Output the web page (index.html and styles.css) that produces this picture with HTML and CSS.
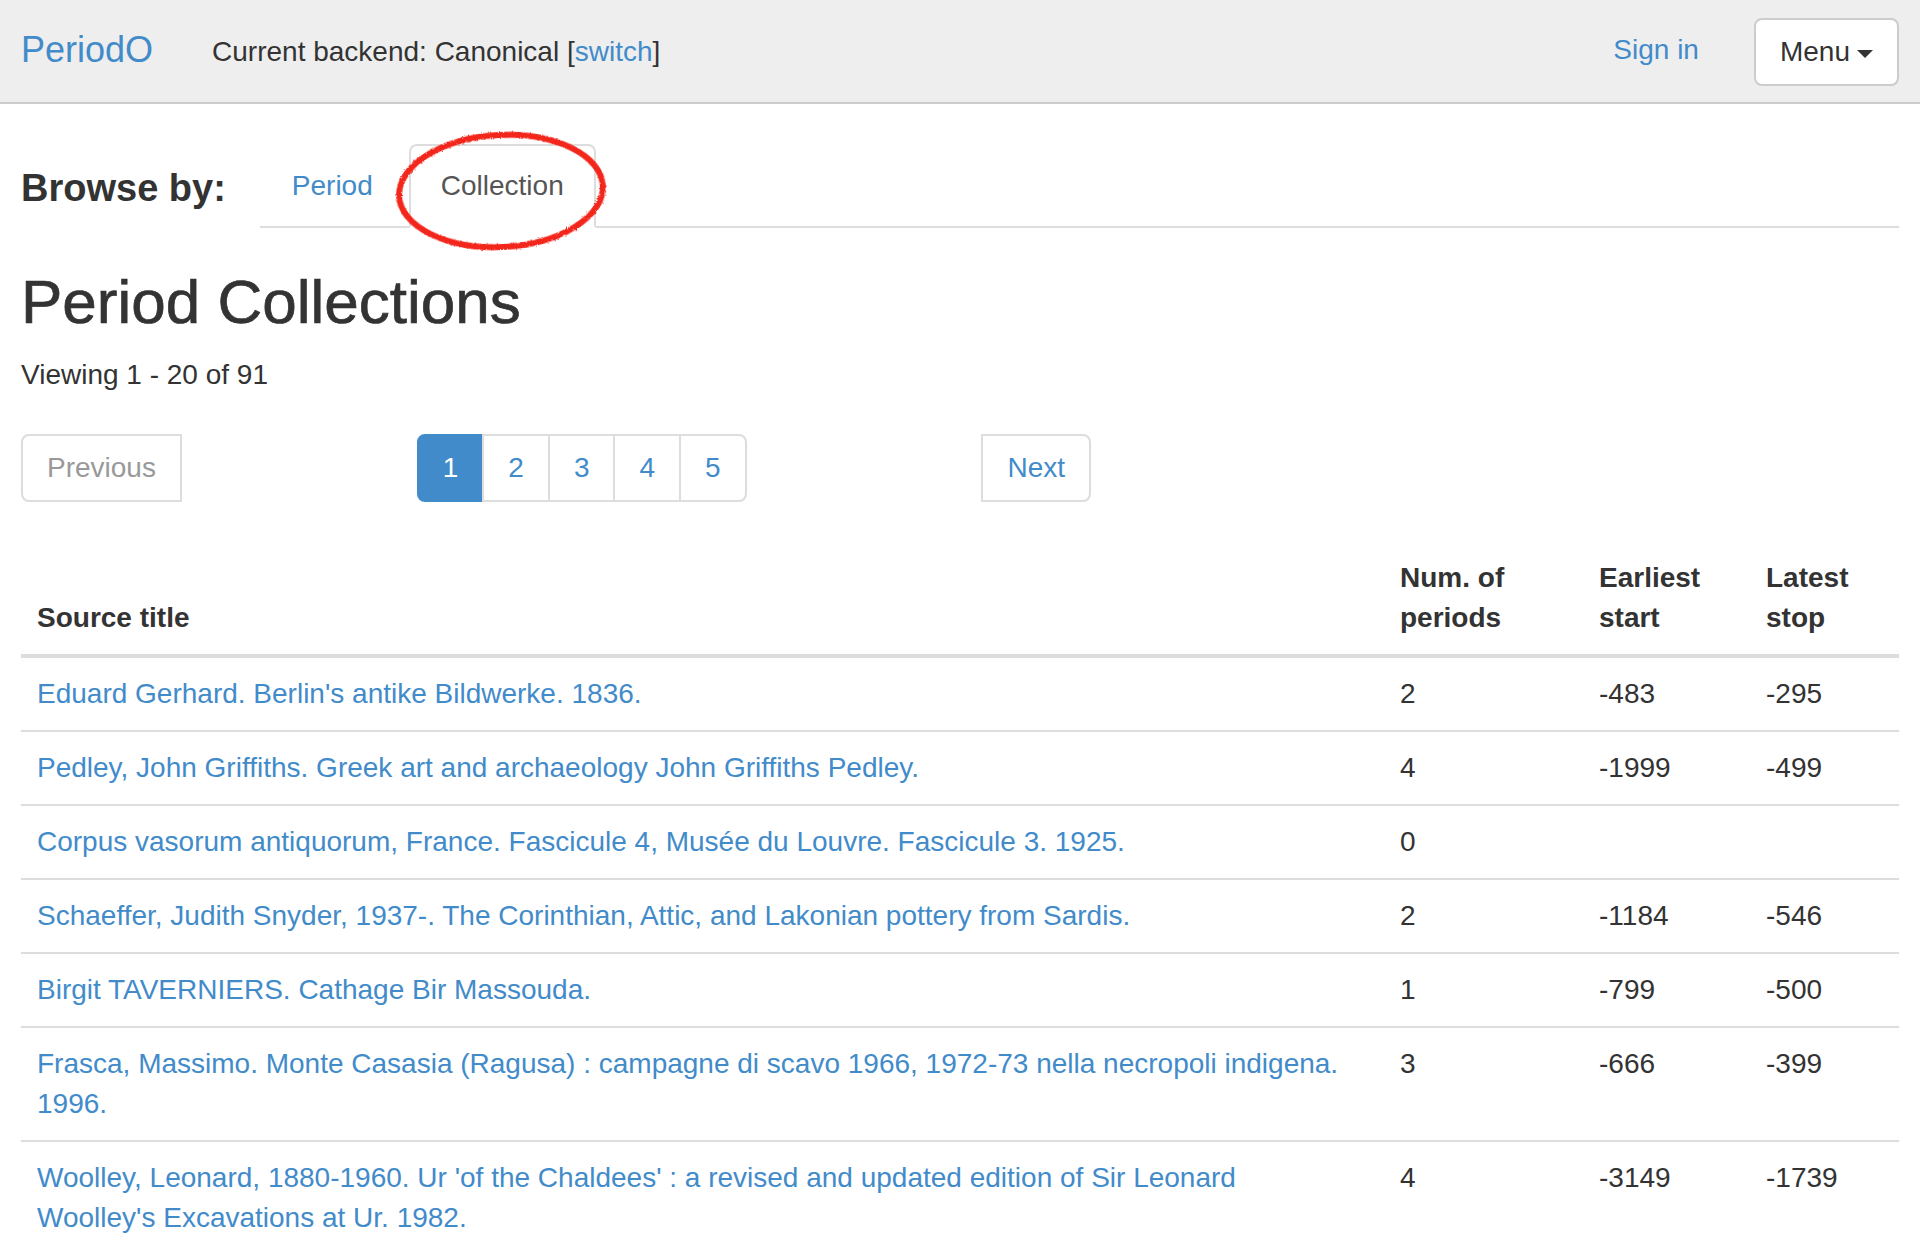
FILE: index.html
```html
<!DOCTYPE html>
<html lang="en">
<head>
<meta charset="utf-8">
<title>PeriodO – Period Collections</title>
<link rel="stylesheet" href="styles.css">
</head>
<body>
<header class="navbar">
  <a class="brand" href="#">PeriodO</a>
  <p class="backend">Current backend: Canonical [<a href="#">switch</a>]</p>
  <div class="nav-right">
    <a class="signin" href="#">Sign in</a>
    <button class="menu-btn" type="button">Menu<span class="caret"></span></button>
  </div>
</header>
<main class="page">
  <div class="browse">
    <h2 class="browse-label">Browse by:</h2>
    <ul class="tabs">
      <li><a href="#">Period</a></li>
      <li class="active"><a href="#">Collection</a></li>
    </ul>
    <svg class="annotation" width="230" height="135" viewBox="0 0 230 135" aria-hidden="true">
      <defs>
        <filter id="rough" x="-10%" y="-10%" width="120%" height="120%">
          <feTurbulence type="fractalNoise" baseFrequency="0.9" numOctaves="2" result="noise"/>
          <feDisplacementMap in="SourceGraphic" in2="noise" scale="3"/>
        </filter>
      </defs>
      <ellipse cx="111" cy="65" rx="102" ry="56" transform="rotate(-3 111 65)" fill="none" stroke="#f3271b" stroke-width="6" filter="url(#rough)"/>
    </svg>
  </div>

  <h1>Period Collections</h1>
  <p class="viewing">Viewing 1 - 20 of 91</p>

  <nav class="pager">
    <ul class="pagination">
      <li class="disabled prev"><span>Previous</span></li>
    </ul>
    <ul class="pagination pages">
      <li class="active first"><span>1</span></li>
      <li><a href="#">2</a></li>
      <li><a href="#">3</a></li>
      <li><a href="#">4</a></li>
      <li class="last"><a href="#">5</a></li>
    </ul>
    <ul class="pagination">
      <li class="next"><a href="#">Next</a></li>
    </ul>
  </nav>

  <table class="table">
    <colgroup>
      <col class="c-title">
      <col class="c-num">
      <col class="c-start">
      <col class="c-stop">
    </colgroup>
    <thead>
      <tr>
        <th>Source title</th>
        <th>Num. of periods</th>
        <th>Earliest start</th>
        <th>Latest stop</th>
      </tr>
    </thead>
    <tbody>
      <tr>
        <td><a href="#">Eduard Gerhard. Berlin's antike Bildwerke. 1836.</a></td>
        <td>2</td><td>-483</td><td>-295</td>
      </tr>
      <tr>
        <td><a href="#">Pedley, John Griffiths. Greek art and archaeology John Griffiths Pedley.</a></td>
        <td>4</td><td>-1999</td><td>-499</td>
      </tr>
      <tr>
        <td><a href="#">Corpus vasorum antiquorum, France. Fascicule 4, Musée du Louvre. Fascicule 3. 1925.</a></td>
        <td>0</td><td></td><td></td>
      </tr>
      <tr>
        <td><a href="#">Schaeffer, Judith Snyder, 1937-. The Corinthian, Attic, and Lakonian pottery from Sardis.</a></td>
        <td>2</td><td>-1184</td><td>-546</td>
      </tr>
      <tr>
        <td><a href="#">Birgit TAVERNIERS. Cathage Bir Massouda.</a></td>
        <td>1</td><td>-799</td><td>-500</td>
      </tr>
      <tr>
        <td><a href="#">Frasca, Massimo. Monte Casasia (Ragusa) : campagne di scavo 1966, 1972-73 nella necropoli indigena. 1996.</a></td>
        <td>3</td><td>-666</td><td>-399</td>
      </tr>
      <tr>
        <td><a href="#">Woolley, Leonard, 1880-1960. Ur 'of the Chaldees' : a revised and updated edition of Sir Leonard Woolley's Excavations at Ur. 1982.</a></td>
        <td>4</td><td>-3149</td><td>-1739</td>
      </tr>
    </tbody>
  </table>
</main>
</body>
</html>
```

FILE: styles.css
```css
* {
  box-sizing: border-box;
}

html {
  overflow: hidden;
}

body {
  margin: 0;
  font-family: "Liberation Sans", Arial, Helvetica, sans-serif;
  font-size: 28px;
  line-height: 40px;
  color: #333;
  background: #fff;
}

a {
  color: #428bca;
  text-decoration: none;
}

/* ---------- navbar ---------- */
.navbar {
  display: flex;
  align-items: flex-start;
  height: 104px;
  padding: 0 21px;
  margin-bottom: 40px;
  background: #eee;
  border-bottom: 2px solid #ccc;
}

.brand {
  font-size: 36px;
  line-height: 40px;
  padding-top: 30px;
}

.backend {
  margin: 32px 0 0 59px;
}

.nav-right {
  margin-left: auto;
  display: flex;
  align-items: flex-start;
}

.signin {
  padding-top: 30px;
  margin-right: 55px;
}

.menu-btn {
  margin-top: 18px;
  height: 68px;
  padding: 12px 24px;
  font: inherit;
  line-height: 40px;
  color: #333;
  background: #fff;
  border: 2px solid #ccc;
  border-radius: 8px;
}

.caret {
  display: inline-block;
  width: 0;
  height: 0;
  margin-left: 7px;
  vertical-align: middle;
  border-top: 8px solid #333;
  border-left: 8px solid transparent;
  border-right: 8px solid transparent;
}

/* ---------- page ---------- */
.page {
  padding: 0 21px;
}

.browse {
  position: relative;
  display: flex;
  align-items: flex-start;
}

.browse-label {
  margin: 0 34px 0 0;
  height: 84px;
  padding-top: 7px;
  font-size: 38px;
  line-height: 74px;
  font-weight: bold;
}

.tabs {
  flex: 1;
  display: flex;
  margin: 0;
  padding: 0;
  list-style: none;
  border-bottom: 2px solid #ddd;
}

.tabs li {
  margin: 0 4px -2px 0;
}

.tabs a {
  display: block;
  padding: 20px 30px;
  line-height: 40px;
  border: 2px solid transparent;
  border-radius: 8px 8px 0 0;
}

.tabs .active a {
  color: #555;
  background: #fff;
  border-color: #ddd;
  border-bottom-color: transparent;
}

.annotation {
  position: absolute;
  left: 369px;
  top: -18px;
  pointer-events: none;
}

h1 {
  margin: 40px 0 19px;
  font-size: 62px;
  line-height: 1.1;
  font-weight: normal;
  -webkit-text-stroke: 0.7px #333;
}

.viewing {
  margin: 0 0 20px;
}

/* ---------- pagination ---------- */
.pager {
  display: flex;
  justify-content: space-between;
  width: 1070px;
  margin: 39px 0 40px;
}

.pagination {
  display: flex;
  margin: 0;
  padding: 0;
  list-style: none;
}

.pagination a,
.pagination span {
  display: block;
  padding: 12px 24px;
  line-height: 40px;
  color: #428bca;
  background: #fff;
  border: 2px solid #ddd;
  margin-left: -2px;
}

.pagination li:first-child a,
.pagination li:first-child span {
  margin-left: 0;
}

.pagination .disabled span {
  color: #999;
}

.pagination .active span {
  color: #fff;
  background: #428bca;
  border-color: #428bca;
}

.pagination .prev span,
.pagination .first span {
  border-radius: 8px 0 0 8px;
}

.pagination .next a,
.pagination .last a {
  border-radius: 0 8px 8px 0;
}

/* ---------- table ---------- */
.table {
  width: 100%;
  border-collapse: collapse;
  table-layout: fixed;
}

.c-num { width: 199px; }
.c-start { width: 167px; }
.c-stop { width: 149px; }

.table th,
.table td {
  padding: 16px;
  text-align: left;
  vertical-align: top;
  line-height: 40px;
  border-top: 2px solid #ddd;
}

.table td:first-child {
  padding-right: 38px;
}

.table thead th {
  vertical-align: bottom;
  font-weight: bold;
  border-top: 0;
  border-bottom: 4px solid #ddd;
}
```
